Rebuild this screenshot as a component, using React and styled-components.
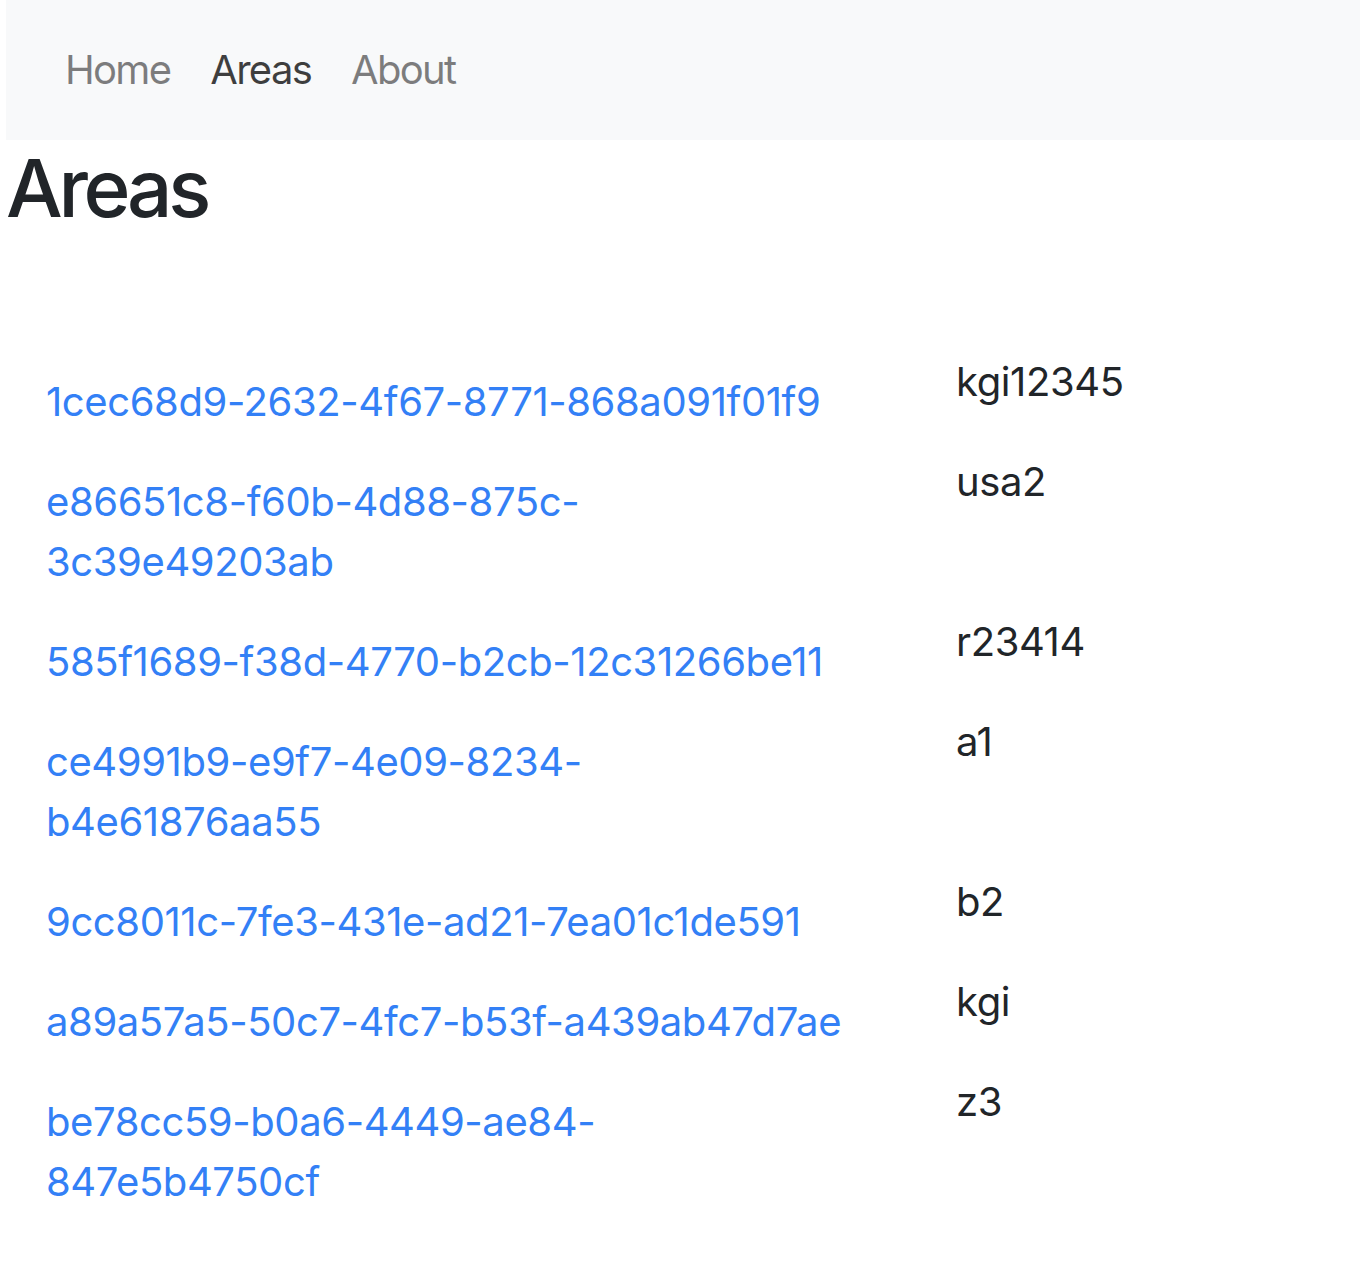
import React from "react";
import styled, { createGlobalStyle } from "styled-components";

const Global = createGlobalStyle`
  html, body { margin: 0; padding: 0; background: #fff; }
  body {
    font-family: Inter, "Helvetica Neue", "Liberation Sans", Arial, sans-serif;
    font-size: 40px;
    line-height: 1.5;
    color: #212529;
  }
`;

const Page = styled.div`
  padding-left: 6px;
`;

const NavBar = styled.nav`
  display: flex;
  align-items: center;
  height: 140px;
  padding: 0 40px 0 39px;
  background: #f8f9fa;
`;

const NavLink = styled.a`
  padding: 0 20px;
  color: ${(p) => (p.$active ? "rgba(0,0,0,0.75)" : "rgba(0,0,0,0.5)")};
  text-decoration: none;
  font-size: 40px;
  line-height: 60px;
  letter-spacing: -1.7px;
`;

const Title = styled.h1`
  margin: 0 0 116px;
  font-size: 80px;
  font-weight: 500;
  line-height: 96px;
  letter-spacing: -4.3px;
`;

const Table = styled.div`
  display: flex;
  flex-direction: column;
`;

const Row = styled.div`
  display: grid;
  grid-template-columns: 950px 1fr;
  align-items: start;
`;

const IdCell = styled.div`
  padding: 20px 105px 20px 40px;
  letter-spacing: -0.4px;
`;

const IdLink = styled.a`
  color: #3380f6;
  text-decoration: none;
`;

const NameCell = styled.div`
  padding: 0;
  letter-spacing: -0.4px;
`;

const areas = [
  ["1cec68d9-2632-4f67-8771-868a091f01f9", "kgi12345"],
  ["e86651c8-f60b-4d88-875c-3c39e49203ab", "usa2"],
  ["585f1689-f38d-4770-b2cb-12c31266be11", "r23414"],
  ["ce4991b9-e9f7-4e09-8234-b4e61876aa55", "a1"],
  ["9cc8011c-7fe3-431e-ad21-7ea01c1de591", "b2"],
  ["a89a57a5-50c7-4fc7-b53f-a439ab47d7ae", "kgi"],
  ["be78cc59-b0a6-4449-ae84-847e5b4750cf", "z3"],
];

export default function App() {
  return (
    <Page>
      <Global />
      <NavBar>
        <NavLink href="#">Home</NavLink>
        <NavLink href="#" $active>Areas</NavLink>
        <NavLink href="#">About</NavLink>
      </NavBar>
      <Title>Areas</Title>
      <Table>
        {areas.map(([id, name]) => (
          <Row key={id}>
            <IdCell>
              <IdLink href="#">{id}</IdLink>
            </IdCell>
            <NameCell>{name}</NameCell>
          </Row>
        ))}
      </Table>
    </Page>
  );
}
